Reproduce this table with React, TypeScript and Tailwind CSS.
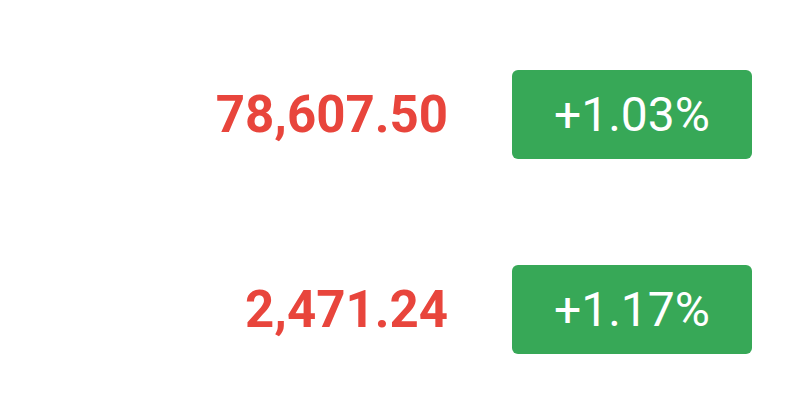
const rows = [
  { value: '78,607.50', change: '+1.03%' },
  { value: '2,471.24', change: '+1.17%' },
];

export default function App() {
  return (
    <div
      className="w-[797px] h-[413px] bg-white flex flex-col items-end pr-[45px] pt-[70px] gap-[106px]"
      style={{ fontFamily: 'Roboto, "Liberation Sans", sans-serif' }}
    >
      {rows.map((row) => (
        <div key={row.value} className="flex items-center gap-[64px]">
          <div className="w-[260px] text-right text-[51px] leading-none font-bold text-[#e8453c]">
            {row.value}
          </div>
          <div className="w-[240px] h-[89px] rounded-[6px] bg-[#37a857] flex items-center justify-center text-white text-[48px] leading-none">
            {row.change}
          </div>
        </div>
      ))}
    </div>
  );
}
